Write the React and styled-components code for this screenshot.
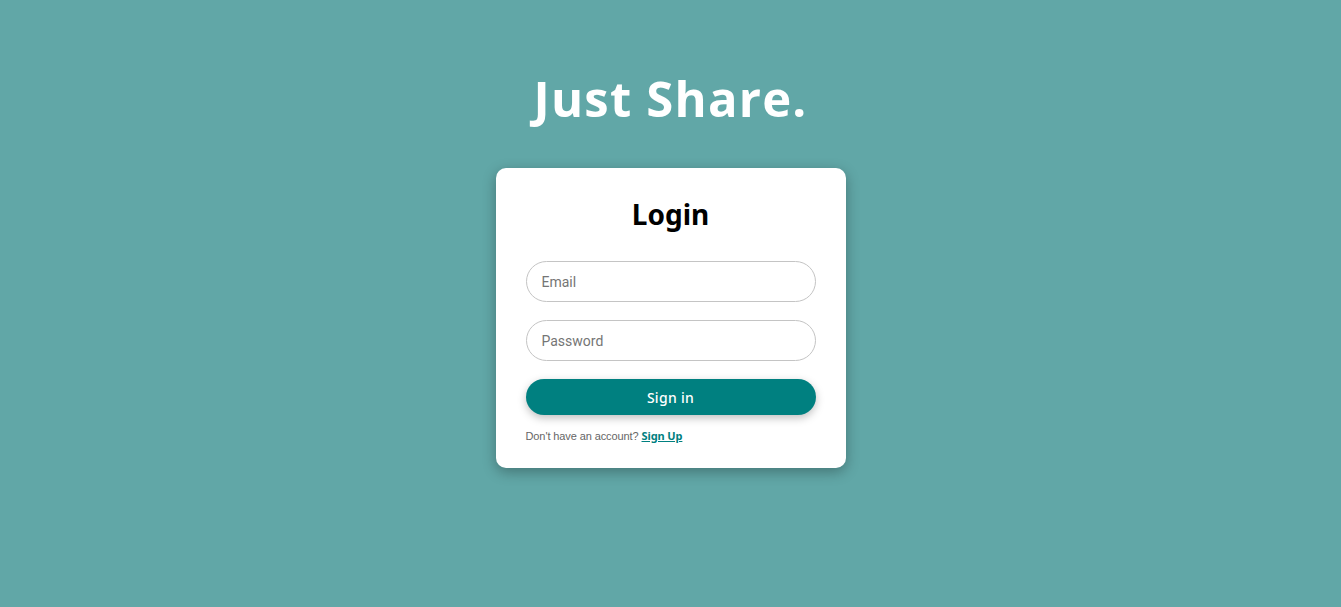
import React from "react";
import styled, { createGlobalStyle } from "styled-components";

const Global = createGlobalStyle`
  html, body { margin: 0; padding: 0; }
  body {
    background: #61a7a7;
    min-height: 100vh;
    font-family: "Open Sans", "Noto Sans", sans-serif;
  }
  * { box-sizing: border-box; }
`;

const Page = styled.main`
  display: flex;
  flex-direction: column;
  align-items: center;
  padding-top: 68px;
`;

const Brand = styled.h1`
  margin: 0;
  color: #fff;
  font-family: "Open Sans", sans-serif;
  font-weight: 700;
  font-size: 49px;
  line-height: 60px;
  letter-spacing: 1.2px;
`;

const Card = styled.form`
  margin-top: 40px;
  width: 350px;
  background: #fff;
  border-radius: 10px;
  box-shadow: 0 4px 14px rgba(0, 0, 0, 0.3);
  padding: 26px 30px 24px;
  display: flex;
  flex-direction: column;
`;

const Title = styled.h2`
  margin: 0 0 27px;
  text-align: center;
  font-family: "Noto Sans", "Open Sans", sans-serif;
  font-weight: 700;
  font-size: 28px;
  line-height: 40px;
  color: #000;
`;

const Input = styled.input`
  width: 100%;
  height: 41px;
  border: 1px solid #c4c4c4;
  border-radius: 21px;
  padding: 0 15px;
  font-family: Roboto, "Liberation Sans", sans-serif;
  font-size: 14px;
  color: #333;
  margin-bottom: 18px;
  outline: none;
  &::placeholder { color: #757575; }
`;

const Button = styled.button`
  width: 100%;
  height: 36px;
  border: none;
  border-radius: 18px;
  background: #008080;
  color: #fff;
  font-family: "Noto Sans", "Open Sans", sans-serif;
  font-size: 14px;
  font-weight: 500;
  letter-spacing: 0.3px;
  box-shadow: 0 3px 8px rgba(0, 0, 0, 0.25);
  cursor: pointer;
`;

const Foot = styled.p`
  margin: 13px 0 0;
  font-family: "Liberation Sans", "Noto Sans", sans-serif;
  font-size: 11px;
  color: #666;
  line-height: 16px;
  letter-spacing: -0.1px;
`;

const Link = styled.a`
  color: #008080;
  font-weight: 700;
  text-decoration: underline;
  font-family: "Noto Sans", sans-serif;
`;

export default function App() {
  return (
    <>
      <Global />
      <Page>
        <Brand>Just Share.</Brand>
        <Card onSubmit={(e) => e.preventDefault()}>
          <Title>Login</Title>
          <Input type="email" placeholder="Email" />
          <Input type="password" placeholder="Password" />
          <Button type="submit">Sign in</Button>
          <Foot>
            Don't have an account? <Link href="#">Sign Up</Link>
          </Foot>
        </Card>
      </Page>
    </>
  );
}
